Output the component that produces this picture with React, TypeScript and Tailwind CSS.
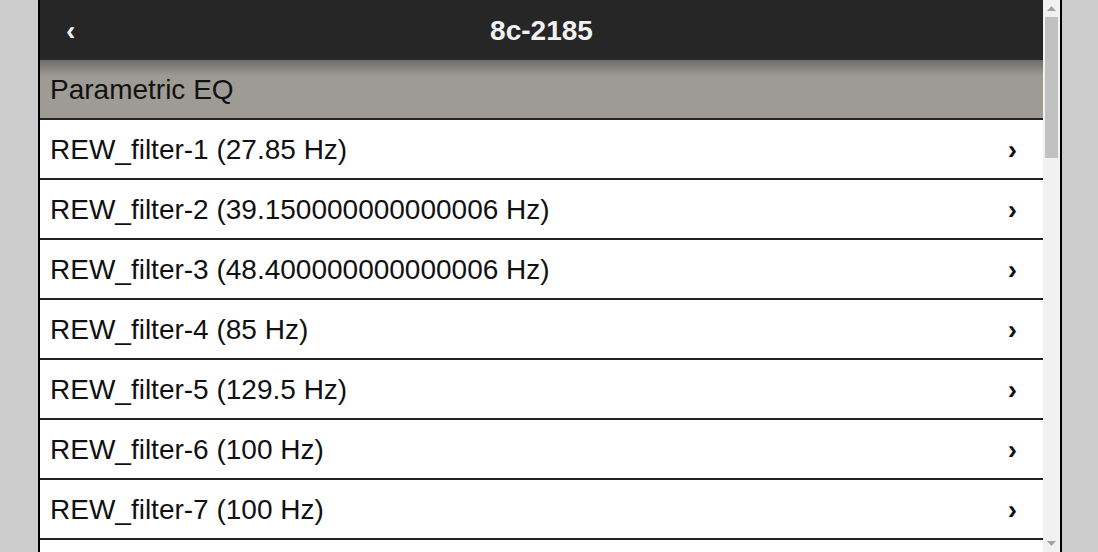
const filters = [
  'REW_filter-1 (27.85 Hz)',
  'REW_filter-2 (39.150000000000006 Hz)',
  'REW_filter-3 (48.400000000000006 Hz)',
  'REW_filter-4 (85 Hz)',
  'REW_filter-5 (129.5 Hz)',
  'REW_filter-6 (100 Hz)',
  'REW_filter-7 (100 Hz)',
]

function Scrollbar() {
  return (
    <div className="w-[17px] h-full bg-[#f1f1f1] flex flex-col items-center">
      {/* up arrow */}
      <div className="h-[17px] flex items-center justify-center">
        <svg width="9" height="5" viewBox="0 0 9 5">
          <path d="M0 5 L4.5 0 L9 5 Z" fill="#a3a3a3" />
        </svg>
      </div>
      {/* thumb */}
      <div className="w-[13px] h-[141px] bg-[#c1c1c1]" />
      <div className="flex-1" />
      {/* down arrow */}
      <div className="h-[17px] flex items-center justify-center">
        <svg width="9" height="5" viewBox="0 0 9 5">
          <path d="M0 0 L4.5 5 L9 0 Z" fill="#a3a3a3" />
        </svg>
      </div>
    </div>
  )
}

export default function App() {
  return (
    <div
      className="w-[1098px] h-[552px] bg-[#cccccc] overflow-hidden"
      style={{ fontFamily: '"Liberation Sans", Arial, sans-serif' }}
    >
      <div className="ml-[38px] w-[1024px] h-full border-x-2 border-black bg-white flex">
        <div className="flex-1 min-w-0 h-full overflow-hidden">
          {/* Top bar */}
          <div className="relative h-[60px] bg-[#262626] flex items-center justify-center pt-[1px] text-[28px] font-bold text-[#f2f2f2]">
            <span className="absolute left-[26px]">‹</span>
            <span>8c-2185</span>
          </div>

          {/* Section header */}
          <div className="h-[60px] border-b-2 border-[#222222] bg-[linear-gradient(to_bottom,#6e6c68_0px,#9e9b95_16px,#9e9b95_100%)] flex items-center pl-[10px] pt-[2px] text-[28px] text-[#111111]">
            Parametric EQ
          </div>

          {/* Filter list */}
          {filters.map((f) => (
            <div
              key={f}
              className="h-[60px] border-b-2 border-[#222222] bg-white flex items-center justify-between pl-[10px] pr-[26px] pt-[2px] text-[28px] text-[#111111]"
            >
              <span>{f}</span>
              <span className="font-bold">›</span>
            </div>
          ))}
        </div>
        <Scrollbar />
      </div>
    </div>
  )
}
